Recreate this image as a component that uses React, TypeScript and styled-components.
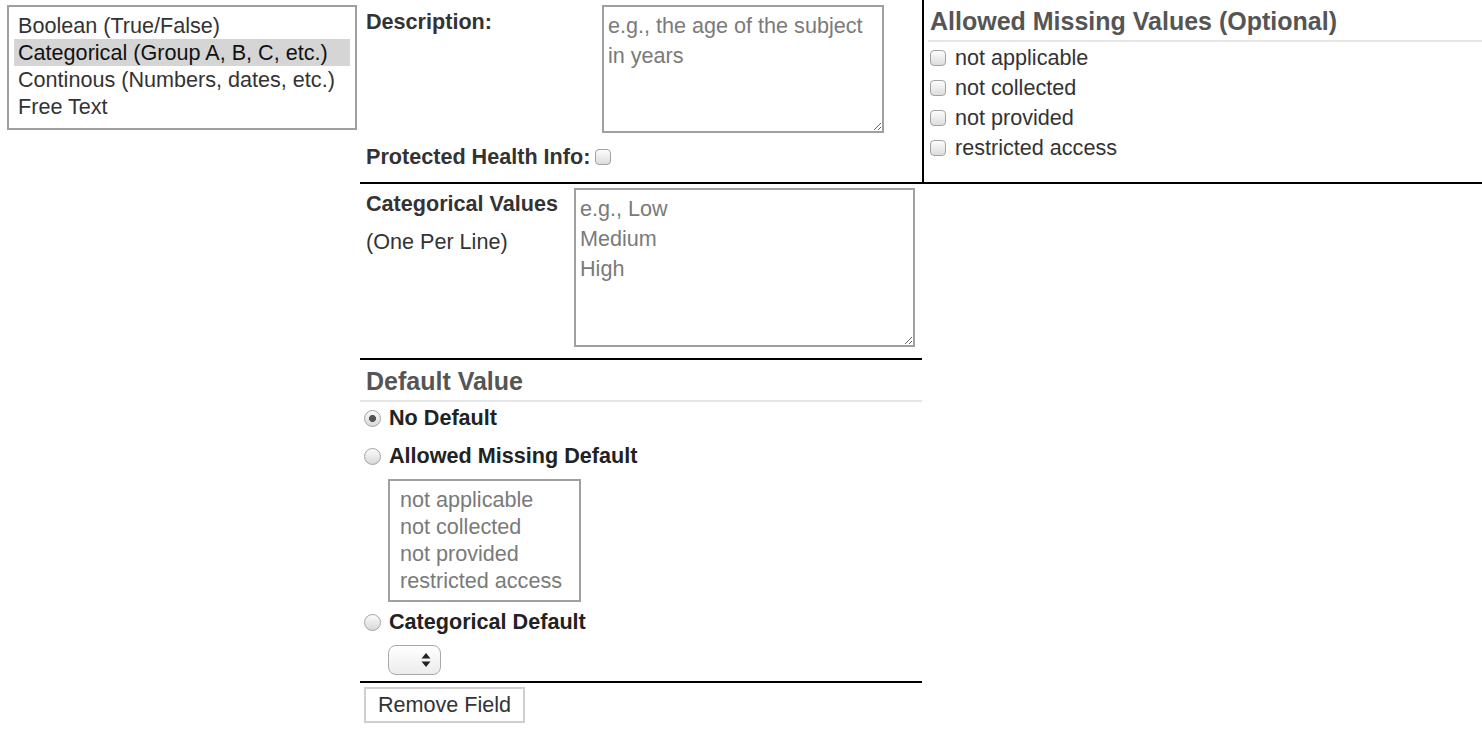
import React from 'react';
import styled, { createGlobalStyle } from 'styled-components';

const GlobalStyle = createGlobalStyle`
  html, body {
    margin: 0;
    background: #fff;
  }
  body {
    font-family: "Liberation Sans", Helvetica, Arial, sans-serif;
    font-size: 21.6px;
    color: #333;
  }
`;

const Page = styled.div`
  display: flex;
  align-items: flex-start;
`;

const TypeColumn = styled.div`
  flex: none;
  width: 360px;
  box-sizing: border-box;
  padding: 5px 0 0 7px;
`;

const ListBox = styled.div<{ $width: number; $padding: string; $muted?: boolean }>`
  width: ${p => p.$width}px;
  box-sizing: border-box;
  border: 2px solid #a0a0a0;
  padding: ${p => p.$padding};
  line-height: 27px;
  color: ${p => (p.$muted ? '#7a7a7a' : '#333')};
  white-space: nowrap;
`;

const Option = styled.div<{ $selected?: boolean }>`
  padding-left: 4px;
  background: ${p => (p.$selected ? '#d5d5d5' : 'transparent')};
  color: ${p => (p.$selected ? '#111' : 'inherit')};
`;

const Form = styled.div`
  flex: 1;
  display: flex;
  flex-direction: column;
`;

const TopSection = styled.div`
  display: flex;
  height: 184px;
  box-sizing: border-box;
  border-bottom: 2px solid #000;
`;

const MainColumn = styled.div`
  flex: none;
  width: 564px;
  box-sizing: border-box;
  border-right: 2px solid #000;
  padding: 5px 0 0 6px;
`;

const FieldRow = styled.div`
  display: flex;
  align-items: flex-start;
`;

const FieldLabel = styled.label<{ $width: number }>`
  flex: none;
  width: ${p => p.$width}px;
  margin-top: 2px;
  font-weight: bold;
  line-height: 30px;
`;

const TextArea = styled.textarea<{ $w: number; $h: number }>`
  width: ${p => p.$w}px;
  height: ${p => p.$h}px;
  box-sizing: border-box;
  margin: 0;
  border: 2px solid #a0a0a0;
  padding: 4px;
  font: inherit;
  line-height: 30px;
  color: #333;
  outline: none;
  resize: both;
  &::placeholder {
    color: #7a7a7a;
  }
`;

const PhiRow = styled.label`
  display: flex;
  align-items: center;
  gap: 5px;
  margin-top: 9px;
  font-weight: bold;
  line-height: 30px;
`;

const Checkbox = styled.input.attrs({ type: 'checkbox' })`
  -webkit-appearance: none;
  appearance: none;
  display: block;
  flex: none;
  margin: 0;
  width: 16px;
  height: 16px;
  box-sizing: border-box;
  border: 1px solid #a3a3a3;
  border-radius: 4px;
  background: linear-gradient(#fdfdfd, #dcdcdc);
`;

const MissingColumn = styled.div`
  flex: 1;
  padding-left: 4px;
`;

const SectionHeading = styled.h3<{ $indent: number }>`
  margin: 0;
  padding: 6px 0 4px ${p => p.$indent}px;
  font-size: 25px;
  font-weight: bold;
  line-height: 30px;
  color: #555;
  border-bottom: 2px solid #e6e6e6;
`;

const CheckList = styled.div`
  margin-top: 1px;
`;

const CheckRow = styled.label`
  display: flex;
  align-items: center;
  gap: 9px;
  height: 30px;
  padding-left: 2px;
`;

const LowerColumn = styled.div`
  width: 562px;
`;

const CatSection = styled.div`
  display: flex;
  border-bottom: 2px solid #000;
  padding: 4px 0 11px 6px;
`;

const CatLabel = styled.div`
  flex: none;
  width: 208px;
  line-height: 30px;
`;

const CatTitle = styled.div`
  margin-top: 1px;
  font-weight: bold;
`;

const CatHint = styled.div`
  margin-top: 8px;
`;

const DefaultSection = styled.div`
  border-bottom: 2px solid #000;
  padding-bottom: 6px;
`;

const RadioRow = styled.label<{ $top: number }>`
  display: flex;
  align-items: center;
  gap: 8px;
  margin-top: ${p => p.$top}px;
  padding-left: 4px;
  font-weight: bold;
  line-height: 30px;
  color: #222;
`;

const Radio = styled.input.attrs({ type: 'radio', name: 'default-value' })`
  -webkit-appearance: none;
  appearance: none;
  display: block;
  flex: none;
  margin: 0;
  width: 17px;
  height: 17px;
  box-sizing: border-box;
  border: 1px solid #a3a3a3;
  border-radius: 50%;
  background: linear-gradient(#fbfbfb, #d8d8d8);
  &:checked {
    background: radial-gradient(circle, #555 0 3.2px, transparent 3.8px),
      linear-gradient(#fbfbfb, #d8d8d8);
  }
`;

const Indented = styled.div<{ $top: number }>`
  margin: ${p => p.$top}px 0 0 28px;
`;

const SelectBox = styled.div`
  display: flex;
  align-items: center;
  justify-content: flex-end;
  width: 53px;
  height: 30px;
  box-sizing: border-box;
  padding-right: 9px;
  border: 1px solid #a9a9a9;
  border-radius: 8px;
  background: linear-gradient(#ffffff, #ececec);
`;

const RemoveButton = styled.button`
  align-self: flex-start;
  margin: 4px 0 0 4px;
  width: 161px;
  height: 36px;
  padding: 0;
  border: 2px solid #cfcfcf;
  background: #fff;
  font: inherit;
  color: #333;
`;

const types = [
  'Boolean (True/False)',
  'Categorical (Group A, B, C, etc.)',
  'Continous (Numbers, dates, etc.)',
  'Free Text',
];

const missing = ['not applicable', 'not collected', 'not provided', 'restricted access'];

const Arrows = () => (
  <svg width="10" height="16" viewBox="0 0 10 16">
    <polygon points="5,1 9.5,6.5 0.5,6.5" fill="#222" />
    <polygon points="0.5,9.5 9.5,9.5 5,15" fill="#222" />
  </svg>
);

export default function App() {
  return (
    <>
      <GlobalStyle />
      <Page>
        <TypeColumn>
          <ListBox $width={350} $padding="5px 5px 8px">
            {types.map((t, i) => (
              <Option key={t} $selected={i === 1}>{t}</Option>
            ))}
          </ListBox>
        </TypeColumn>

        <Form>
          <TopSection>
            <MainColumn>
              <FieldRow>
                <FieldLabel $width={236}>Description:</FieldLabel>
                <TextArea $w={282} $h={128} placeholder="e.g., the age of the subject in years" />
              </FieldRow>
              <PhiRow>
                Protected Health Info:
                <Checkbox />
              </PhiRow>
            </MainColumn>
            <MissingColumn>
              <SectionHeading $indent={2}>Allowed Missing Values (Optional)</SectionHeading>
              <CheckList>
                {missing.map(m => (
                  <CheckRow key={m}>
                    <Checkbox />
                    {m}
                  </CheckRow>
                ))}
              </CheckList>
            </MissingColumn>
          </TopSection>

          <LowerColumn>
            <CatSection>
              <CatLabel>
                <CatTitle>Categorical Values</CatTitle>
                <CatHint>(One Per Line)</CatHint>
              </CatLabel>
              <TextArea $w={341} $h={159} placeholder={'e.g., Low\nMedium\nHigh'} />
            </CatSection>

            <DefaultSection>
              <SectionHeading $indent={6}>Default Value</SectionHeading>
              <RadioRow $top={1}>
                <Radio defaultChecked />
                No Default
              </RadioRow>
              <RadioRow $top={8}>
                <Radio />
                Allowed Missing Default
              </RadioRow>
              <Indented $top={8}>
                <ListBox $width={193} $padding="5px 10px 6px 6px" $muted>
                  {missing.map(m => (
                    <Option key={m}>{m}</Option>
                  ))}
                </ListBox>
              </Indented>
              <RadioRow $top={5}>
                <Radio />
                Categorical Default
              </RadioRow>
              <Indented $top={8}>
                <SelectBox>
                  <Arrows />
                </SelectBox>
              </Indented>
            </DefaultSection>

            <RemoveButton>Remove Field</RemoveButton>
          </LowerColumn>
        </Form>
      </Page>
    </>
  );
}
